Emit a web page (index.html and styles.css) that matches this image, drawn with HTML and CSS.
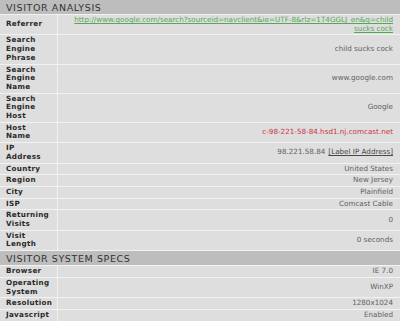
FILE: index.html
```html
<!DOCTYPE html>
<html>
<head>
<meta charset="utf-8">
<link rel="stylesheet" href="styles.css">
</head>
<body>
<div class="panel">
  <div class="section">VISITOR ANALYSIS</div>
  <div class="row"><div class="label">Referrer</div><div class="value top"><a class="link" href="#">http://www.google.com/search?sourceid=navclient&amp;ie=UTF-8&amp;rlz=1T4GGLJ_en&amp;q=child sucks cock</a></div></div>
  <div class="row"><div class="label">Search Engine Phrase</div><div class="value">child sucks cock</div></div>
  <div class="row"><div class="label">Search Engine Name</div><div class="value">www.google.com</div></div>
  <div class="row"><div class="label">Search Engine Host</div><div class="value">Google</div></div>
  <div class="row"><div class="label">Host Name</div><div class="value host">c-98-221-58-84.hsd1.nj.comcast.net</div></div>
  <div class="row"><div class="label">IP Address</div><div class="value">98.221.58.84 <a class="ip" href="#">[Label IP Address]</a></div></div>
  <div class="row"><div class="label">Country</div><div class="value">United States</div></div>
  <div class="row"><div class="label">Region</div><div class="value">New Jersey</div></div>
  <div class="row"><div class="label">City</div><div class="value">Plainfield</div></div>
  <div class="row"><div class="label">ISP</div><div class="value">Comcast Cable</div></div>
  <div class="row"><div class="label">Returning Visits</div><div class="value">0</div></div>
  <div class="row"><div class="label">Visit Length</div><div class="value">0 seconds</div></div>
  <div class="section">VISITOR SYSTEM SPECS</div>
  <div class="row"><div class="label">Browser</div><div class="value">IE 7.0</div></div>
  <div class="row"><div class="label">Operating System</div><div class="value">WinXP</div></div>
  <div class="row"><div class="label">Resolution</div><div class="value">1280x1024</div></div>
  <div class="row"><div class="label">Javascript</div><div class="value">Enabled</div></div>
</div>
</body>
</html>
```
FILE: styles.css
```css
html, body {
  margin: 0;
  padding: 0;
  background: #dedede;
}
.panel {
  width: 400px;
  font-family: "DejaVu Sans", Verdana, sans-serif;
  font-size: 7.2px;
}
.section {
  height: 14px;
  line-height: 15px;
  background: #bdbdbd;
  color: #333;
  font-size: 9.5px;
  letter-spacing: 0.6px;
  padding-left: 6px;
  border-bottom: 1px solid #f2f2f2;
}
.row {
  display: flex;
  border-bottom: 1px solid #f2f2f2;
  background: #dedede;
}
.label {
  width: 44px;
  flex: none;
  display: flex;
  align-items: center;
  padding: 1px 7px 1px 6px;
  line-height: 8.7px;
  font-weight: bold;
  color: #2a2a2a;
  letter-spacing: 0.3px;
  border-right: 1px solid #f2f2f2;
}
.value {
  flex: 1;
  display: flex;
  align-items: center;
  justify-content: flex-end;
  text-align: right;
  padding: 1px 7px 1px 6px;
  line-height: 8.7px;
  color: #606060;
}
.value.top {
  align-items: flex-start;
}
.link {
  color: #55a855;
  text-decoration: underline;
}
.host {
  color: #cc3340;
}
.ip {
  color: #484848;
  text-decoration: underline;
  margin-left: 3px;
}
```
